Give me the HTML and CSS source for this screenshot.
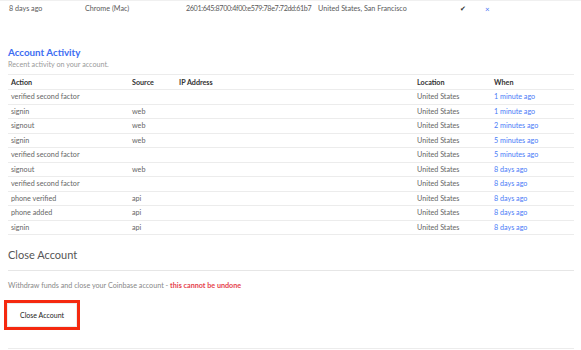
FILE: index.html
```html
<!DOCTYPE html>
<html lang="en">

<head>
    <meta charset="UTF-8">
    <meta name="viewport" content="width=device-width, initial-scale=1.0">
    <title>Account Settings</title>
    <link rel="stylesheet" href="styles.css">
</head>

<body>
    <div class="session-row">
        <span class="s-when">8 days ago</span>
        <span class="s-browser">Chrome (Mac)</span>
        <span class="s-ip">2601:645:8700:4f00:e579:78e7:72dd:61b7</span>
        <span class="s-loc">United States, San Francisco</span>
        <span class="s-check">&#10004;</span>
        <span class="s-remove">&times;</span>
    </div>

    <div class="section">
        <h3 class="activity-title">Account Activity</h3>
        <p class="subtitle">Recent activity on your account.</p>

        <table class="activity">
            <thead>
                <tr>
                    <th class="c-action">Action</th>
                    <th class="c-source">Source</th>
                    <th class="c-ip">IP Address</th>
                    <th class="c-loc">Location</th>
                    <th class="c-when">When</th>
                </tr>
            </thead>
            <tbody>
                <tr><td>verified second factor</td><td></td><td></td><td>United States</td><td class="ago">1 minute ago</td></tr>
                <tr><td>signin</td><td>web</td><td></td><td>United States</td><td class="ago">1 minute ago</td></tr>
                <tr><td>signout</td><td>web</td><td></td><td>United States</td><td class="ago">2 minutes ago</td></tr>
                <tr><td>signin</td><td>web</td><td></td><td>United States</td><td class="ago">5 minutes ago</td></tr>
                <tr><td>verified second factor</td><td></td><td></td><td>United States</td><td class="ago">5 minutes ago</td></tr>
                <tr><td>signout</td><td>web</td><td></td><td>United States</td><td class="ago">8 days ago</td></tr>
                <tr><td>verified second factor</td><td></td><td></td><td>United States</td><td class="ago">8 days ago</td></tr>
                <tr><td>phone verified</td><td>api</td><td></td><td>United States</td><td class="ago">8 days ago</td></tr>
                <tr><td>phone added</td><td>api</td><td></td><td>United States</td><td class="ago">8 days ago</td></tr>
                <tr><td>signin</td><td>api</td><td></td><td>United States</td><td class="ago">8 days ago</td></tr>
            </tbody>
        </table>
    </div>

    <div class="section close">
        <h3 class="close-title">Close Account</h3>
        <p class="warning">Withdraw funds and close your Coinbase account - <strong>this cannot be undone</strong></p>
        <div class="highlight">
            <button class="close-btn">Close Account</button>
        </div>
    </div>
    <div class="bottom-line"></div>
</body>

</html>
```

FILE: styles.css
```css
body {
    margin: 0;
    width: 581px;
    height: 350px;
    overflow: hidden;
    background: #fff;
    font-family: Lato, "Noto Sans", sans-serif;
    font-size: 7.2px;
    color: #555;
    position: relative;
}

.session-row {
    display: flex;
    align-items: center;
    height: 15px;
    border-top: 1px solid #f0f0f0;
    color: #5a5a5a;
}

.s-when {
    margin-left: 9px;
    width: 76px;
}

.s-browser {
    width: 101px;
}

.s-ip {
    width: 132px;
    letter-spacing: -0.36px;
}

.s-loc {
    width: 142px;
}

.s-check {
    width: 25px;
    color: #333;
    font-size: 7px;
}

.s-remove {
    color: #4a78f5;
    font-size: 8px;
}

.section {
    padding: 0 7px 0 8px;
}

.activity-title {
    margin: 29px 0 0;
    font-size: 9.8px;
    line-height: 14px;
    font-weight: 700;
    color: #3d6df2;
}

.subtitle {
    margin: 1px 0 0;
    line-height: 10px;
    color: #9a9a9a;
}

.activity {
    margin-top: 4px;
    width: 566px;
    border-collapse: collapse;
    table-layout: fixed;
    border-top: 1px solid #ececec;
}

.activity th,
.activity td {
    height: 13.5px;
    padding: 0 0 0 3px;
    text-align: left;
    border-bottom: 1px solid #ececec;
    white-space: nowrap;
    line-height: 13px;
}

.activity th {
    height: 14px;
    font-weight: 700;
    color: #333;
}

.activity td {
    color: #666;
}

.c-action {
    width: 118px;
}

.c-source {
    width: 44px;
}

.c-ip {
    width: 235px;
}

.c-loc {
    width: 74px;
}

.activity td.ago {
    color: #4a7bf7;
}

.close-title {
    margin: 13px 0 0;
    font-size: 11px;
    line-height: 14px;
    font-weight: 400;
    color: #555;
    padding-bottom: 8px;
    border-bottom: 1px solid #e6e6e6;
}

.warning {
    margin: 10px 0 0;
    font-size: 7.2px;
    line-height: 10px;
    color: #888;
}

.warning strong {
    color: #e5434d;
    font-weight: 700;
}

.highlight {
    margin: 9px 0 0 -4px;
    width: 70px;
    height: 24px;
    border: 3px solid #f5290f;
    padding: 0;
}

.close-btn {
    display: block;
    width: 70px;
    height: 24px;
    margin: 0;
    background: #fff;
    border: 1px solid #ececec;
    font-family: Lato, "Noto Sans", sans-serif;
    font-size: 7px;
    color: #222;
    padding: 0;
}

.bottom-line {
    position: absolute;
    left: 8px;
    right: 7px;
    bottom: 1px;
    border-top: 1px solid #ececec;
}
```
